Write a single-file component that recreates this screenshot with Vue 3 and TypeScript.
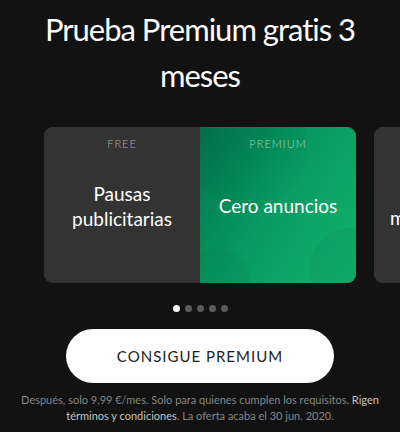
<script setup lang="ts">
import { ref } from 'vue'

const slideCount = 5
const active = ref(0)
</script>

<template>
  <main class="offer">
    <h1 class="title">Prueba Premium gratis 3 meses</h1>

    <section class="carousel" aria-label="Premium">
      <article class="card">
        <div class="plan free">
          <h2 class="plan-name">FREE</h2>
          <p class="benefit">Pausas publicitarias</p>
        </div>
        <div class="plan premium">
          <svg class="circles" viewBox="0 0 156 156" preserveAspectRatio="none" aria-hidden="true">
            <defs>
              <linearGradient id="shade" x1="0" y1="0" x2="1" y2="1">
                <stop offset="0" stop-color="#005c42" stop-opacity="0.5" />
                <stop offset="1" stop-color="#008a56" stop-opacity="0" />
              </linearGradient>
            </defs>
            <circle cx="48" cy="22" r="60" fill="url(#shade)" />
            <circle cx="18" cy="153" r="32" fill="#04724c" fill-opacity="0.13" />
            <circle cx="150" cy="141" r="40" fill="#04724c" fill-opacity="0.13" />
          </svg>
          <h2 class="plan-name">PREMIUM</h2>
          <p class="benefit">Cero anuncios</p>
        </div>
      </article>
      <article class="card">
        <div class="plan free upcoming">
          <p class="benefit"><br />m</p>
        </div>
      </article>
    </section>

    <nav class="dots">
      <button
        v-for="n in slideCount"
        :key="n"
        type="button"
        class="dot"
        :class="{ on: n - 1 === active }"
        :aria-label="String(n)"
        @click="active = n - 1"
      ></button>
    </nav>

    <button type="button" class="cta">CONSIGUE PREMIUM</button>

    <p class="legal">
      Después, solo 9,99 €/mes. Solo para quienes cumplen los requisitos.
      <a href="#terms">Rigen términos y condiciones</a>. La oferta acaba el 30 jun. 2020.
    </p>
  </main>
</template>

<style>
body {
  background: #121212;
}
</style>

<style scoped>
.offer {
  display: flex;
  flex-direction: column;
  align-items: center;
  overflow: hidden;
  padding-top: 6px;
  color: #fff;
  background: #121212;
  font-family: Lato, "Liberation Sans", sans-serif;
}

.title {
  margin: 0;
  padding: 0 32px;
  font-size: 31px;
  font-weight: 400;
  line-height: 46px;
  letter-spacing: -1px;
  text-align: center;
}

.carousel {
  display: flex;
  gap: 18px;
  align-self: stretch;
  margin-top: 29px;
  padding: 0 44px;
}

.card {
  display: grid;
  flex: 0 0 100%;
  grid-template-columns: repeat(2, minmax(0, 1fr));
  overflow: hidden;
  border-radius: 9px;
  background: #333;
}

.plan {
  position: relative;
  display: flex;
  flex-direction: column;
  align-items: center;
  box-sizing: border-box;
  aspect-ratio: 1;
  padding-top: 9px;
  text-align: center;
}

.free {
  background: #333;
}

.premium {
  background: linear-gradient(120deg, #00744f 0%, #099b61 48%, #12b36c 100%);
}

.circles {
  position: absolute;
  inset: 0;
  width: 100%;
  height: 100%;
}

.plan-name {
  position: relative;
  margin: 0;
  color: rgba(255, 255, 255, 0.6);
  font-size: 11px;
  font-weight: 300;
  line-height: 16px;
  letter-spacing: 1px;
}

.benefit {
  position: relative;
  display: flex;
  flex: 1;
  align-items: center;
  margin: 0;
  padding: 0 16px 24px;
  font-size: 19px;
  line-height: 25px;
}

.upcoming {
  align-items: flex-start;
  padding-top: 25px;
}

.upcoming .benefit {
  display: block;
  padding-top: 28px;
}

.dots {
  display: flex;
  gap: 5px;
  margin-top: 22px;
}

.dot {
  width: 7px;
  height: 7px;
  padding: 0;
  border: 0;
  border-radius: 50%;
  background: #5a5a5a;
}

.dot.on {
  background: #fff;
}

.cta {
  width: 67%;
  height: 54px;
  margin-top: 17px;
  border: 0;
  border-radius: 27px;
  color: #1c1c1c;
  background: #fff;
  font-family: inherit;
  font-size: 15px;
  letter-spacing: 1px;
}

.legal {
  margin: 9px 0 0;
  padding: 0 12px;
  color: #858585;
  font-size: 11px;
  line-height: 16px;
  text-align: center;
}

.legal a {
  color: #c4c4c4;
  text-decoration: none;
}
</style>
